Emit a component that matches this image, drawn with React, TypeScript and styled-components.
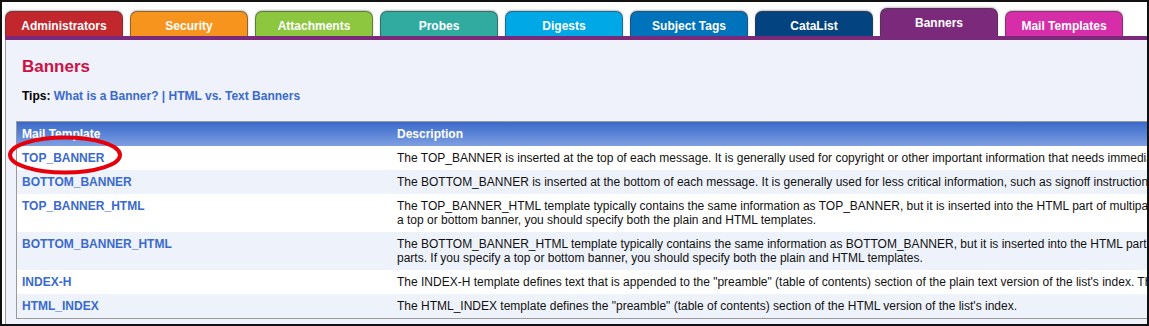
import React from "react";
import styled, { createGlobalStyle } from "styled-components";

const GlobalStyle = createGlobalStyle`
  html, body { margin: 0; padding: 0; background: #ffffff; }
  body { font-family: "Liberation Sans", Arial, sans-serif; }
`;

const Frame = styled.div`
  width: 1149px;
  height: 326px;
  box-sizing: border-box;
  border: 2px solid #111;
  overflow: hidden;
  background: #fff;
`;

const Page = styled.div`
  width: 1600px;
  padding: 6px 0 0 3px;
`;

const TabBar = styled.div`
  display: flex;
  align-items: flex-end;
  gap: 7px;
  height: 28px;
`;

const Tab = styled.div<{ $color: string; $active?: boolean }>`
  width: 118px;
  height: ${(p) => (p.$active ? 28 : 25)}px;
  box-sizing: border-box;
  padding-top: 7px;
  display: flex;
  justify-content: center;
  background: ${(p) => p.$color};
  border-radius: 7px 7px 0 0;
  border: 1px solid rgba(60, 60, 60, 0.55);
  border-bottom: none;
  box-shadow: 0 -1px 2px rgba(0, 0, 0, 0.25);
  color: #fff;
  font-weight: bold;
  font-size: 12px;
  line-height: 14px;
  white-space: nowrap;
`;

const Bar = styled.div`
  height: 4px;
  background: #7b2a7b;
`;

const Panel = styled.div`
  border-left: 1px solid #999;
  background: #eff2fa;
  padding: 17px 0 12px 10px;
`;

const Heading = styled.h1`
  margin: 0;
  padding-left: 6px;
  font-size: 17px;
  line-height: 20px;
  font-weight: bold;
  color: #cc1144;
`;

const Tips = styled.div`
  margin-top: 12px;
  padding-left: 6px;
  font-size: 12px;
  line-height: 14px;
  font-weight: bold;
  color: #000;
`;

const Link = styled.a`
  color: #3a6acd;
  font-weight: bold;
  text-decoration: none;
`;

const TableWrap = styled.div`
  position: relative;
  margin-top: 18px;
`;

const Table = styled.table`
  border-collapse: separate;
  border-spacing: 0;
  border: 1px solid #9a9a9a;
  table-layout: fixed;
  width: 1500px;
  font-size: 12px;
  line-height: 14px;
`;

const HeadCell = styled.th`
  text-align: left;
  padding: 5px;
  height: 14px;
  color: #fff;
  font-weight: bold;
  background: linear-gradient(to bottom, #3b69c9 0%, #5b84d6 50%, #7f9fe1 100%);
`;

const Row = styled.tr<{ $alt?: boolean }>`
  background: ${(p) => (p.$alt ? "#eef2fa" : "#ffffff")};
`;

const Cell = styled.td`
  padding: 5px;
  vertical-align: top;
  color: #111;
  white-space: nowrap;
`;

const Ring = styled.svg`
  position: absolute;
  left: -9px;
  top: 14px;
  pointer-events: none;
`;

const tabs = [
  { label: "Administrators", color: "#c1272d" },
  { label: "Security", color: "#f7941d" },
  { label: "Attachments", color: "#8dc63f" },
  { label: "Probes", color: "#31aba0" },
  { label: "Digests", color: "#00a8e6" },
  { label: "Subject Tags", color: "#0073bd" },
  { label: "CataList", color: "#03437f" },
  { label: "Banners", color: "#7b2a7b", active: true },
  { label: "Mail Templates", color: "#d62ea9" },
];

const rows: { name: string; lines: string[] }[] = [
  {
    name: "TOP_BANNER",
    lines: [
      "The TOP_BANNER is inserted at the top of each message. It is generally used for copyright or other important information that needs immediate attention from the reader.",
    ],
  },
  {
    name: "BOTTOM_BANNER",
    lines: [
      "The BOTTOM_BANNER is inserted at the bottom of each message. It is generally used for less critical information, such as signoff instructions or list policies.",
    ],
  },
  {
    name: "TOP_BANNER_HTML",
    lines: [
      "The TOP_BANNER_HTML template typically contains the same information as TOP_BANNER, but it is inserted into the HTML part of multipart messages. If you specify",
      "a top or bottom banner, you should specify both the plain and HTML templates.",
    ],
  },
  {
    name: "BOTTOM_BANNER_HTML",
    lines: [
      "The BOTTOM_BANNER_HTML template typically contains the same information as BOTTOM_BANNER, but it is inserted into the HTML part of multipart messages and HTML",
      "parts. If you specify a top or bottom banner, you should specify both the plain and HTML templates.",
    ],
  },
  {
    name: "INDEX-H",
    lines: [
      "The INDEX-H template defines text that is appended to the \"preamble\" (table of contents) section of the plain text version of the list's index. This text appears after the file list.",
    ],
  },
  {
    name: "HTML_INDEX",
    lines: [
      "The HTML_INDEX template defines the \"preamble\" (table of contents) section of the HTML version of the list's index.",
    ],
  },
];

export default function App() {
  return (
    <>
      <GlobalStyle />
      <Frame>
        <Page>
          <TabBar>
            {tabs.map((t) => (
              <Tab key={t.label} $color={t.color} $active={t.active}>
                {t.label}
              </Tab>
            ))}
          </TabBar>
          <Bar />
          <Panel>
            <Heading>Banners</Heading>
            <Tips>
              Tips: <Link href="#">What is a Banner?</Link> <Link as="span">|</Link>{" "}
              <Link href="#">HTML vs. Text Banners</Link>
            </Tips>
            <TableWrap>
              <Table>
                <colgroup>
                  <col style={{ width: 375 }} />
                  <col />
                </colgroup>
                <thead>
                  <tr>
                    <HeadCell>Mail Template</HeadCell>
                    <HeadCell>Description</HeadCell>
                  </tr>
                </thead>
                <tbody>
                  {rows.map((r, i) => (
                    <Row key={r.name} $alt={i % 2 === 1}>
                      <Cell>
                        <Link href="#">{r.name}</Link>
                      </Cell>
                      <Cell>
                        {r.lines.map((l, j) => (
                          <React.Fragment key={j}>
                            {j > 0 && <br />}
                            {l}
                          </React.Fragment>
                        ))}
                      </Cell>
                    </Row>
                  ))}
                </tbody>
              </Table>
              <Ring width="116" height="40" viewBox="0 0 116 40">
                <ellipse cx="58" cy="20" rx="55" ry="17.5" fill="none" stroke="#e5000c" strokeWidth="4" />
              </Ring>
            </TableWrap>
          </Panel>
        </Page>
      </Frame>
    </>
  );
}
